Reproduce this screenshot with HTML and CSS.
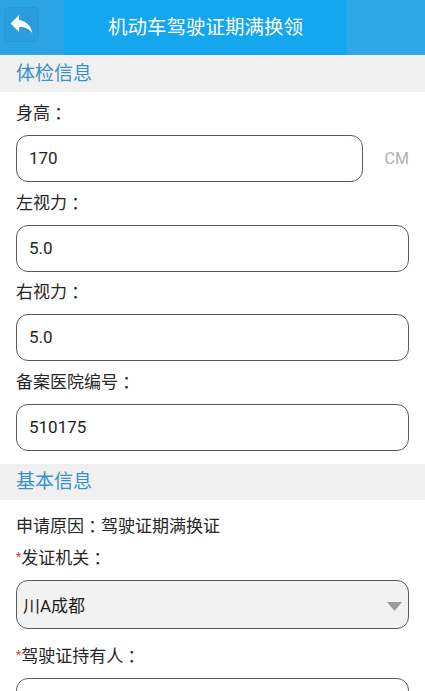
FILE: index.html
```html
<!DOCTYPE html>
<html lang="zh-CN">
<head>
    <meta charset="UTF-8">
    <meta name="viewport" content="width=device-width, initial-scale=1.0">
    <title>机动车驾驶证期满换领</title>
    <link rel="stylesheet" href="styles.css">
</head>
<body>
    <!-- Top Bar -->
    <div class="topbar">
        <div class="back-cell">
            <div class="back-btn">
                <svg width="29" height="29" viewBox="0 0 24 24">
                    <path d="M10 9V5l-7 7 7 7v-4.1c5 0 8.5 1.6 11 5.1-1-5-4-10-11-11z" fill="#ffffff"/>
                </svg>
            </div>
        </div>
        <div class="title">机动车驾驶证期满换领</div>
        <div class="right-cell"></div>
    </div>

    <!-- Medical Check Section -->
    <div class="band">体检信息</div>
    <div class="form">
        <div class="field">
            <label>身高<span class="colon">：</span></label>
            <div class="row">
                <div class="input">170</div>
                <span class="unit">CM</span>
            </div>
        </div>
        <div class="field">
            <label>左视力<span class="colon">：</span></label>
            <div class="input">5.0</div>
        </div>
        <div class="field">
            <label>右视力<span class="colon">：</span></label>
            <div class="input">5.0</div>
        </div>
        <div class="field">
            <label>备案医院编号<span class="colon">：</span></label>
            <div class="input">510175</div>
        </div>
    </div>

    <!-- Basic Info Section -->
    <div class="band">基本信息</div>
    <div class="form basic">
        <p class="reason">申请原因<span class="colon">：</span>驾驶证期满换证</p>
        <div class="field">
            <label><span class="req">*</span>发证机关<span class="colon">：</span></label>
            <div class="select">
                <span>川A成都</span>
                <svg width="15" height="9" viewBox="0 0 15 9">
                    <path d="M0 0h15L7.5 9z" fill="#9a9a9a"/>
                </svg>
            </div>
        </div>
        <div class="field">
            <label><span class="req">*</span>驾驶证持有人<span class="colon">：</span></label>
            <div class="input"></div>
        </div>
    </div>
</body>
</html>
```

FILE: styles.css
```css
/* General */
body {
    margin: 0;
    font-family: Roboto, "Noto Sans CJK SC", sans-serif;
    background-color: #ffffff;
    color: #262626;
    overflow: hidden;
}

/* Top Bar */
.topbar {
    display: flex;
    height: 55px;
}

.back-cell {
    width: 64px;
    background-color: #2ba3e5;
    padding: 7px 0 0 4px;
    box-sizing: border-box;
}

.back-btn {
    width: 35px;
    height: 35px;
    box-sizing: border-box;
    border: 1px solid rgba(0, 0, 0, 0.04);
    border-radius: 5px;
    background-color: rgba(0, 0, 0, 0.03);
    display: flex;
    align-items: center;
    justify-content: center;
}

.back-btn svg {
    margin-top: -2px;
}

.title {
    flex: 1;
    background-color: #14a6ee;
    color: #ffffff;
    font-size: 19.5px;
    text-align: center;
    line-height: 55px;
}

.right-cell {
    width: 78px;
    background-color: #30a8e7;
}

/* Section Bands */
.band {
    height: 36px;
    line-height: 36px;
    background-color: #f0f0f0;
    color: #3a90c8;
    font-size: 19px;
    padding-left: 16px;
    margin-top: 1px;
}

/* Form */
.form {
    padding: 9px 16px 4px;
}

.field {
    margin-bottom: 8.6px;
}

label {
    display: block;
    font-size: 17px;
    line-height: 24px;
    margin-bottom: 10px;
}

/* full-width colon centred in its cell */
.colon {
    display: inline-block;
    width: 1em;
    text-align: center;
    font-feature-settings: "halt";
}

.row {
    display: flex;
    align-items: center;
}

.input {
    flex: 1;
    height: 47px;
    box-sizing: border-box;
    border: 1.3px solid #5a5a5a;
    border-radius: 12px;
    padding-left: 12px;
    font-size: 17px;
    line-height: 45px;
    color: #1e1e1e;
}

.unit {
    width: 46px;
    text-align: right;
    color: #b0b0b0;
    font-size: 16px;
}

/* Basic Info */
.basic {
    padding-top: 14px;
}

.reason {
    margin: 0 0 7px;
    font-size: 17px;
    line-height: 24px;
}

.req {
    color: #e53935;
    font-size: 12px;
    vertical-align: 3px;
}

.select {
    height: 49px;
    box-sizing: border-box;
    border: 1.3px solid #5a5a5a;
    border-radius: 12px;
    background-color: #f2f2f2;
    display: flex;
    align-items: center;
    justify-content: space-between;
    padding: 0 6px 0 6px;
    font-size: 17px;
    color: #1e1e1e;
    margin-bottom: 14px;
}

.select svg {
    margin-top: 3px;
}
```
